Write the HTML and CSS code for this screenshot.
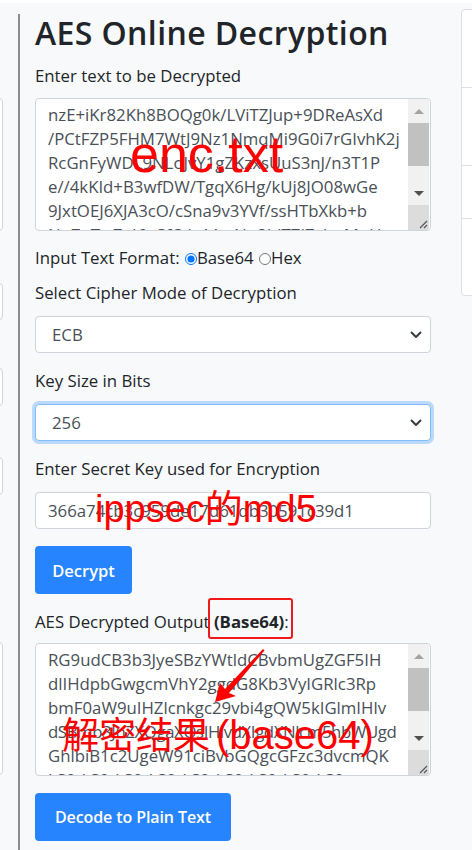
FILE: index.html
```html
<!DOCTYPE html>
<html lang="en">
<head>
<meta charset="utf-8">
<title>AES Online Decryption</title>
<link rel="stylesheet" href="styles.css">
</head>
<body>
<div class="topbar"></div>
<div class="page">
  <div class="stub">
    <div class="stub-box sb1"></div>
    <div class="stub-box sb2"></div>
    <div class="stub-box sb3"></div>
    <div class="stub-box sb4"></div>
    <div class="stub-box sb5"></div>
  </div>

  <main class="main">
    <h2 class="title">AES Online Decryption</h2>

    <label class="lbl lbl-first">Enter text to be Decrypted</label>
    <div class="ta">
      <div class="ta-text">nzE+iKr82Kh8BOQg0k/LViTZJup+9DReAsXd
/PCtFZP5FHM7WtJ9Nz1NmqMi9G0i7rGIvhK2j
RcGnFyWDL9NLoJvY1gZKzxsUuS3nJ/n3T1P
e//4kKId+B3wfDW/TgqX6Hg/kUj8JO08wGe
9JxtOEJ6XJA3cO/cSna9v3YVf/ssHTbXkb+b
Nu7nTw7aI6uSfQ/u1AwNu8IdT7IZsIcvMpU</div>
      <div class="sb">
        <div class="sb-btn"><svg width="10" height="5" viewBox="0 0 10 5"><path d="M0 5L5 0L10 5Z" fill="#a3a3a3"/></svg></div>
        <div class="sb-thumb"></div>
        <div class="sb-fill"></div>
        <div class="sb-btn"><svg width="10" height="5" viewBox="0 0 10 5"><path d="M0 0L10 0L5 5Z" fill="#505050"/></svg></div>
        <div class="sb-corner"><svg width="10" height="10" viewBox="0 0 10 10"><path d="M9 2L2 9M9 6L6 9" stroke="#555" stroke-width="1.2"/></svg></div>
      </div>
    </div>

    <div class="radio-row">Input Text Format: <input class="radio" type="radio" name="fmt" checked>Base64 <input class="radio" type="radio" name="fmt">Hex</div>

    <label class="lbl lbl-gap">Select Cipher Mode of Decryption</label>
    <div class="select-wrap">
      <div class="sel">ECB</div>
      <svg class="chev" width="12" height="7" viewBox="0 0 12 7"><path d="M1 1l5 5 5-5" fill="none" stroke="#343a40" stroke-width="2"/></svg>
    </div>

    <label class="lbl lbl-sec">Key Size in Bits</label>
    <div class="select-wrap">
      <div class="sel sel-focus">256</div>
      <svg class="chev" width="12" height="7" viewBox="0 0 12 7"><path d="M1 1l5 5 5-5" fill="none" stroke="#343a40" stroke-width="2"/></svg>
    </div>

    <label class="lbl lbl-sec">Enter Secret Key used for Encryption</label>
    <div class="inp">366a74cb3c959de17d61db30591c39d1</div>

    <button class="btn btn-decrypt">Decrypt</button>

    <label class="lbl lbl-out">AES Decrypted Output <span class="hl"><b class="strong">(Base64)</b>:<span class="hl-box"></span></span></label>
    <div class="ta ta-out">
      <div class="ta-text">RG9udCB3b3JyeSBzYWtldCBvbmUgZGF5IH
dlIHdpbGwgcmVhY2ggdG8Kb3VyIGRlc3Rp
bmF0aW9uIHZlcnkgc29vbi4gQW5kIGlmIHlv
<span class="tight">dSBmb3JnZXQgaXQsIHlvdXIgdXNlcm5hbWUgd</span>
GhlbiB1c2UgeW91ciBvbGQgcGFzc3dvcmQK
LS0tLS0tLS0tLS0tLS0tLS0tLS0tLS0tLS0t</div>
      <div class="sb">
        <div class="sb-btn"><svg width="10" height="5" viewBox="0 0 10 5"><path d="M0 5L5 0L10 5Z" fill="#a3a3a3"/></svg></div>
        <div class="sb-thumb"></div>
        <div class="sb-fill"></div>
        <div class="sb-btn"><svg width="10" height="5" viewBox="0 0 10 5"><path d="M0 0L10 0L5 5Z" fill="#505050"/></svg></div>
        <div class="sb-corner"><svg width="10" height="10" viewBox="0 0 10 10"><path d="M9 2L2 9M9 6L6 9" stroke="#555" stroke-width="1.2"/></svg></div>
      </div>
    </div>

    <button class="btn btn-decode">Decode to Plain Text</button>
  </main>

  <aside class="side">
    <div class="side-item si1"></div>
    <div class="side-item si2"></div>
    <div class="side-item si3"></div>
    <div class="side-item si4"></div>
  </aside>
</div>

<div class="anno anno-enc">enc.txt</div>
<div class="anno anno-key">ippsec的md5</div>
<div class="anno anno-res">解密结果<span class="anno-lat">(base64)</span></div>
<svg class="anno-arrow" width="60" height="62" viewBox="210 645 60 62">
  <path d="M215 702 L220 683 L225 689 L263 649 L264.5 650.5 L229 693 L236 696 Z" fill="#ff0000"/>
</svg>
</body>
</html>
```

FILE: styles.css
```css
html, body {
  margin: 0;
  padding: 0;
}

body {
  position: relative;
  height: 850px;
  overflow: hidden;
  background: #f8f9fa;
  font-family: "Open Sans", "Noto Sans", sans-serif;
  color: #212529;
}

.topbar {
  height: 3px;
  background: #ffffff;
}

.page {
  display: flex;
  align-items: flex-start;
}

/* left column, mostly off-screen */
.stub {
  width: 3px;
  flex: none;
  overflow: hidden;
}

.stub-box {
  width: 20px;
  margin-left: -17px;
  box-sizing: border-box;
  border: 1px solid #ced4da;
  border-radius: 4px;
  background: #ffffff;
}

.sb1 { margin-top: 95px; height: 133px; }
.sb2 { margin-top: 52px; height: 37px; }
.sb3 { margin-top: 48px; height: 38px; }
.sb4 { margin-top: 51px; height: 38px; }
.sb5 { margin-top: 147px; height: 133px; }

/* main column */
.main {
  flex: none;
  width: 396px;
  margin-left: 15px;
  margin-top: 11px;
  padding-left: 15px;
  padding-bottom: 60px;
  border-left: 2px solid #8d8d8d;
}

.title {
  margin: 0 0 13px;
  font-size: 32px;
  line-height: 37px;
  font-weight: 600;
  letter-spacing: 0.4px;
  color: #212529;
}

.lbl {
  display: block;
  font-size: 16.8px;
  line-height: 24px;
}

.lbl-gap { margin-top: 11px; }
.lbl-sec { margin-top: 16px; }
.lbl-out { margin-top: 16px; }

/* textarea look-alike */
.ta {
  display: flex;
  height: 133px;
  margin-top: 10px;
  box-sizing: border-box;
  border: 1px solid #ced4da;
  border-radius: 4px;
  background: #ffffff;
  overflow: hidden;
}

.ta-out { margin-top: 9px; }

.ta-text {
  flex: 1;
  padding: 4px 0 0 12px;
  font-size: 16.8px;
  line-height: 24px;
  color: #495057;
  white-space: pre;
  overflow: hidden;
}

.tight { letter-spacing: -0.4px; }

.sb {
  flex: none;
  width: 21px;
  margin-right: 1px;
  display: flex;
  flex-direction: column;
  background: #f1f1f1;
}

.sb-btn {
  height: 24px;
  display: flex;
  align-items: center;
  justify-content: center;
}

.sb-thumb {
  height: 43px;
  background: #c1c1c1;
}

.sb-fill { flex: 1; }

.sb-corner {
  height: 24px;
  background: #dcdcdc;
  display: flex;
  align-items: flex-end;
  justify-content: flex-end;
  padding: 0 1px 1px 0;
}

/* radios */
.radio-row {
  margin-top: 15px;
  font-size: 16.8px;
  line-height: 24px;
}

.radio {
  width: 12px;
  height: 12px;
  margin: 0 0 0 1px;
  vertical-align: -1px;
  accent-color: #0075ff;
}

/* selects */
.select-wrap {
  position: relative;
  margin-top: 11px;
}

.sel {
  height: 37px;
  box-sizing: border-box;
  padding: 0 16px;
  border: 1px solid #ced4da;
  border-radius: 4px;
  background: #ffffff;
  font-size: 16.8px;
  line-height: 35px;
  color: #495057;
}

.sel-focus {
  border-color: #80bdff;
  box-shadow: 0 0 0 3px rgba(0, 123, 255, 0.25);
}

.chev {
  position: absolute;
  right: 9px;
  top: 15px;
}

.inp {
  height: 37px;
  margin-top: 11px;
  box-sizing: border-box;
  padding: 0 12px;
  border: 1px solid #ced4da;
  border-radius: 4px;
  background: #ffffff;
  font-size: 16.8px;
  line-height: 35px;
  color: #495057;
}

/* buttons */
.btn {
  display: block;
  height: 48px;
  margin-top: 17px;
  padding: 0;
  border: none;
  border-radius: 4px;
  background: #2684ff;
  color: #ffffff;
  font-family: "Open Sans", "Noto Sans", sans-serif;
  font-size: 16.5px;
  font-weight: 600;
  white-space: nowrap;
  text-align: center;
}

.btn-decrypt { width: 97px; }
.btn-decode { width: 196px; font-size: 16px; letter-spacing: -0.1px; }

.strong { font-weight: 700; }

.hl {
  position: relative;
}

.hl-box {
  position: absolute;
  left: -6px;
  right: -4px;
  top: -12px;
  bottom: -6px;
  border: 2px solid #f01818;
  border-radius: 3px;
}

/* right column card */
.side {
  flex: none;
  width: 40px;
  margin-left: 30px;
  margin-top: 6px;
  background: #ffffff;
  border: 1px solid #dcdfe3;
  border-radius: 4px;
}

.side-item + .side-item { border-top: 1px solid #dcdfe3; }
.si1 { height: 77px; }
.si2 { height: 77px; }
.si3 { height: 52px; }
.si4 { height: 76px; }

/* red annotations drawn over the screenshot */
.anno {
  position: absolute;
  color: #ff0000;
  line-height: 1;
  white-space: nowrap;
  font-family: "Liberation Sans", "Noto Sans CJK SC", sans-serif;
}

.anno-enc {
  left: 130px;
  top: 128px;
  font-size: 52px;
}

.anno-key {
  left: 95px;
  top: 490px;
  font-size: 38px;
}

.anno-res {
  left: 62px;
  top: 715px;
  font-size: 37px;
}

.anno-lat {
  font-size: 40px;
  margin-left: 6px;
}

.anno-arrow {
  position: absolute;
  left: 210px;
  top: 645px;
}
```
